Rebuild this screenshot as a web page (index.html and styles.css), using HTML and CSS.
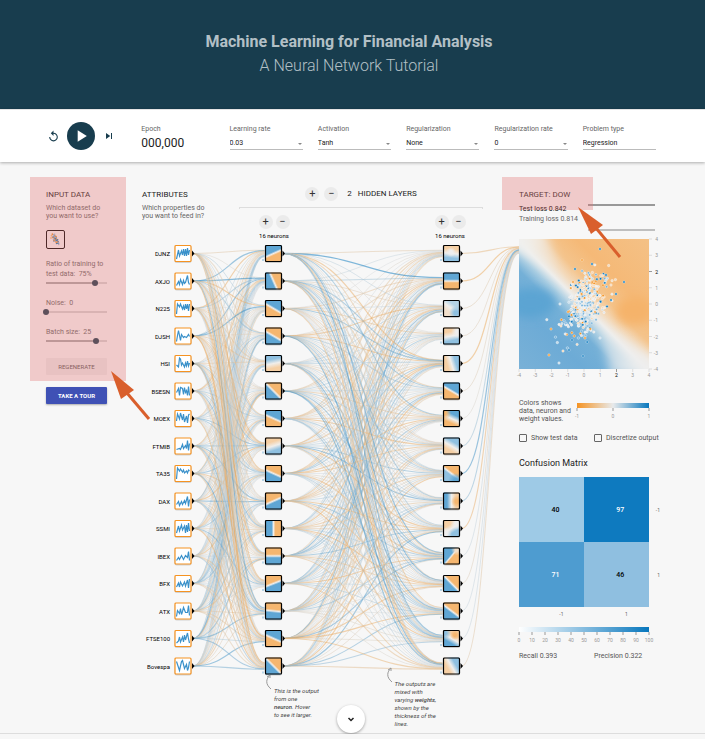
FILE: index.html
```html
<!DOCTYPE html>
<html lang="en">
<head>
<meta charset="utf-8">
<title>Machine Learning for Financial Analysis</title>
<link rel="stylesheet" href="styles.css">
</head>
<body>
<header class="masthead">
  <h1>Machine Learning for Financial Analysis</h1>
  <p>A Neural Network Tutorial</p>
</header>

<section class="controls">
  <div class="playback">
    <button class="icon-btn" aria-label="Reset">
      <svg viewBox="0 0 24 24" width="13" height="13"><path d="M12 5V1L7 6l5 5V7c3.300 0 6 2.700 6 6s-2.700 6-6 6-6-2.700-6-6H4c0 4.400 3.600 8 8 8s8-3.600 8-8-3.600-8-8-8z"/></svg>
    </button>
    <button class="play-btn" aria-label="Run">
      <svg viewBox="0 0 24 24" width="20" height="20"><path d="M8 5v14l11-7z"/></svg>
    </button>
    <button class="icon-btn" aria-label="Step">
      <svg viewBox="0 0 24 24" width="12" height="12"><path d="M6 18l8.500-6L6 6v12zM16 6v12h2V6h-2z"/></svg>
    </button>
  </div>
  <div class="epoch"><span class="label">Epoch</span><output>000,000</output></div>
  <div class="field"><label for="lr">Learning rate</label><div class="select"><select id="lr"><option>0.03</option></select></div></div>
  <div class="field"><label for="act">Activation</label><div class="select"><select id="act"><option>Tanh</option></select></div></div>
  <div class="field"><label for="reg">Regularization</label><div class="select"><select id="reg"><option>None</option></select></div></div>
  <div class="field"><label for="rate">Regularization rate</label><div class="select"><select id="rate"><option>0</option></select></div></div>
  <div class="field"><label for="problem">Problem type</label><div class="select plain"><select id="problem"><option>Regression</option></select></div></div>
</section>

<main class="board">
  <section class="inputs">
    <h2>Input data</h2>
    <p class="hint">Which dataset do<br>you want to use?</p>
    <button class="dataset" aria-label="Dataset"><svg id="thumb" viewBox="0 0 15 15"></svg></button>
    <div class="slider"><label for="ratio">Ratio of training to<br>test data:&nbsp; 75%</label><input type="range" id="ratio" min="0" max="100" value="80"></div>
    <div class="slider"><label for="noise">Noise:&nbsp; 0</label><input type="range" id="noise" min="0" max="50" value="0"></div>
    <div class="slider"><label for="batch">Batch size:&nbsp; 25</label><input type="range" id="batch" min="1" max="30" value="25"></div>
    <button class="regenerate">REGENERATE</button>
    <button class="tour">TAKE A TOUR</button>
    <svg class="pointer" viewBox="0 0 42 52" width="42" height="52"><path d="M1 1L24 20 11 29z"/><path class="shaft" d="M17 23L39 49"/></svg>
  </section>

  <section class="network">
    <div class="network-head">
      <div>
        <h2>Attributes</h2>
        <p class="hint">Which properties do<br>you want to feed in?</p>
      </div>
      <div class="layers">
        <div class="layer-count">
          <button class="round" aria-label="Add layer">+</button><button class="round" aria-label="Remove layer">−</button>
          <h2><span>2</span> Hidden layers</h2>
        </div>
        <div class="bracket"></div>
        <div class="layer-tools">
          <div><button class="round" aria-label="Add neuron to layer 1">+</button><button class="round" aria-label="Remove neuron from layer 1">−</button><p>16 neurons</p></div>
          <div><button class="round" aria-label="Add neuron to layer 2">+</button><button class="round" aria-label="Remove neuron from layer 2">−</button><p>16 neurons</p></div>
        </div>
      </div>
    </div>
    <div class="canvas">
      <svg id="net" viewBox="0 0 377 440"></svg>
      <p class="note note-neuron"><svg viewBox="0 0 10 18" width="10" height="18"><path d="M7 16C1 11 2 6 6 2M3 4L6 2 6 5"/></svg>This is the output<br>from one<br><b>neuron</b>. Hover<br>to see it larger.</p>
      <p class="note note-weights"><svg viewBox="0 0 10 18" width="10" height="18"><path d="M7 16C1 11 2 6 6 2M3 4L6 2 6 5"/></svg>The outputs are<br>mixed with<br>varying <b>weights</b>,<br>shown by the<br>thickness of the<br>lines.</p>
    </div>
  </section>

  <section class="result">
    <h2>Target: DOW</h2>
    <div class="loss">
      <div class="loss-text"><p class="test">Test loss 0.842</p><p>Training loss 0.814</p></div>
      <svg viewBox="0 0 67 28" preserveAspectRatio="none"><path d="M0 1H67" stroke="#999" stroke-width="2"/><path d="M0 26H67" stroke="#bfbfbf" stroke-width="2"/></svg>
    </div>
    <svg id="heat" viewBox="0 0 141 141"></svg>
    <div class="legend">
      <p>Colors shows<br>data, neuron and<br>weight values.</p>
      <svg id="legend-bar" viewBox="0 0 84 24"></svg>
    </div>
    <div class="checks">
      <label><input type="checkbox">Show test data</label>
      <label><input type="checkbox">Discretize output</label>
    </div>
    <h3>Confusion Matrix</h3>
    <table class="matrix">
      <tbody>
        <tr><td class="c40">40</td><td class="c97">97</td><th scope="row">-1</th></tr>
        <tr><td class="c71">71</td><td class="c46">46</td><th scope="row">1</th></tr>
      </tbody>
      <tfoot><tr><th scope="col">-1</th><th scope="col">1</th><td></td></tr></tfoot>
    </table>
    <svg id="scale" viewBox="0 0 141 18"></svg>
    <div class="scores"><span>Recall 0.393</span><span>Precision 0.322</span></div>
    <svg class="pointer" viewBox="0 0 46 56" width="46" height="56"><path d="M1 2L26 20 14 29z"/><path class="shaft" d="M19 23L43 52"/></svg>
  </section>

  <button class="more" aria-label="Read more"><svg viewBox="0 0 24 24" width="12" height="12"><path d="M7 10l5 5 5-5"/></svg></button>
</main>
<script src="network.js"></script>
</body>
</html>
```
FILE: styles.css
```css
* { box-sizing: border-box; }

body {
  margin: 0;
  background: #f7f7f7;
  color: #222;
  font-family: Roboto, "Liberation Sans", sans-serif;
  font-size: 7px;
  line-height: 8px;
}

h1, h2, h3, p { margin: 0; font-weight: 400; }

button, select, input { font: inherit; color: inherit; margin: 0; }

button { border: 0; padding: 0; background: none; cursor: pointer; }

svg { display: block; overflow: visible; }

.masthead {
  height: 109px;
  padding: 30px 7px 0 0;
  background: #183d4e;
  color: #b3c0c6;
  text-align: center;
  line-height: 24px;
}

.masthead h1 { font-size: 16px; line-height: 24px; font-weight: 700; }
.masthead p { font-size: 16px; font-weight: 300; }

.controls {
  display: grid;
  grid-template-columns: 80fr repeat(6, 73fr);
  column-gap: 15px;
  padding: 12px 49px 9px 46px;
  background: #fff;
  border-top: 1px solid #e4e4e4;
  box-shadow: 0 1px 3px rgba(0, 0, 0, .3);
  position: relative;
  color: #666;
  height: 53px;
}

.playback { display: flex; align-items: center; gap: 6px; height: 28px; }

.icon-btn { display: grid; place-items: center; width: 15px; height: 15px; }

.icon-btn svg { fill: #183d4e; }

.play-btn {
  display: grid;
  place-items: center;
  flex: none;
  width: 28px;
  height: 28px;
  border-radius: 50%;
  background: #183d4e;
}

.play-btn svg { fill: #fff; }

.epoch, .field { display: flex; flex-direction: column; padding-top: 3px; }

.epoch output { color: #222; font-size: 12px; line-height: 14px; font-weight: 400; margin-top: 3px; }

.select { position: relative; margin-top: 4px; border-bottom: 1px solid #bbb; }

.select::after {
  content: "";
  position: absolute;
  right: 1px;
  top: 6px;
  border: 2px solid transparent;
  border-top-color: #888;
}

.select.plain::after { display: none; }

.select select {
  display: block;
  appearance: none;
  width: 100%;
  height: 12px;
  padding: 0;
  border: 0;
  background: none;
  color: #222;
}

.board {
  position: relative;
  display: grid;
  grid-template-columns: minmax(0, 96fr) minmax(0, 377fr) minmax(0, 141fr);
  padding: 28px 45px 0 46px;
  border-bottom: 1px solid #ddd;
  min-height: 572px;
}

h2 { font-size: 8px; line-height: 10px; text-transform: uppercase; }

.hint { margin-top: 4px; color: #666; }

.inputs, .result { position: relative; }

.inputs { padding-right: 35px; }

.inputs::before, .result::before {
  content: "";
  position: absolute;
  z-index: 2;
  background: rgba(227, 118, 118, .35);
  pointer-events: none;
}

.inputs::before { top: -13px; left: -16px; right: 16px; height: 204px; }
.result::before { top: -13px; left: -17px; width: 91px; height: 33px; }

.dataset {
  display: block;
  width: 19px;
  height: 19px;
  margin: 10px 0;
  border: 1px solid #000;
  border-radius: 2px;
  padding: 1px;
}

.slider { margin-bottom: 11px; color: #666; line-height: 10px; }

.slider label { display: block; white-space: nowrap; }

.slider input {
  display: block;
  appearance: none;
  width: calc(100% + 6px);
  height: 8px;
  margin: 0 -3px;
  background: linear-gradient(#d5d5d5, #d5d5d5) center / calc(100% - 6px) 2px no-repeat;
}

.slider input::-webkit-slider-thumb {
  appearance: none;
  width: 6px;
  height: 6px;
  border-radius: 50%;
  background: #183d4e;
}

.slider #ratio, .slider #batch {
  background: linear-gradient(90deg, #aaa 80%, #d5d5d5 80%) center / calc(100% - 6px) 2px no-repeat;
}

.regenerate, .tour { display: block; width: 100%; height: 17px; border-radius: 1px; font-size: 6px; white-space: nowrap; }

.regenerate { margin-top: 13px; background: #ececec; color: #555; }

.tour {
  position: relative;
  margin-top: 12px;
  background: #3f51b5;
  color: #fff;
  font-weight: 700;
  box-shadow: 0 1px 2px rgba(0, 0, 0, .3);
}

.pointer { position: absolute; z-index: 3; fill: #d95f2c; pointer-events: none; }
.pointer .shaft { stroke: #d95f2c; stroke-width: 3; }
.inputs .pointer { left: 64px; top: 180px; }
.result .pointer { left: 58px; top: 15px; }

.network-head { display: grid; grid-template-columns: 97fr 244fr 36fr; height: 50px; }

.network-head .hint { white-space: nowrap; }

.round {
  width: 14px;
  height: 14px;
  border-radius: 50%;
  background: #ebebeb;
  color: #333;
  font-size: 11px;
  line-height: 14px;
}

.layer-count { display: flex; justify-content: center; gap: 5px; margin-top: -3px; align-items: center; }

.layer-count h2 { margin-left: 4px; white-space: nowrap; }

.layer-count h2 span { margin-right: 4px; }

.bracket { height: 2px; margin: 6px 0; border: 1px solid #ddd; border-bottom: 0; }

.layer-tools { display: flex; justify-content: space-between; text-align: center; }

.layer-tools > div { width: 70px; }

.layer-tools > div:last-child { width: 66px; }

.layer-tools .round + .round { margin-left: 3px; }

.layer-tools p { font-size: 6px; margin-top: 3px; color: #000; }

.canvas { position: relative; }

.note { position: absolute; font-size: 6px; font-style: italic; color: #444; white-space: nowrap; }

.note b { font-weight: 500; }

.note svg { position: absolute; left: -10px; top: -14px; fill: none; stroke: #999; }

.note-neuron { left: 35%; top: 447px; }
.note-weights { left: 67%; top: 440px; }

.loss { display: flex; justify-content: space-between; padding: 4px 5px 0 0; height: 39px; color: #666; line-height: 10px; }

.loss svg { width: 67px; height: 28px; margin-left: -10px; }

.loss-text { white-space: nowrap; }

.loss .test { color: #000; }

#heat, #scale { width: 100%; }

.legend { display: grid; grid-template-columns: 57fr 84fr; margin-top: 19px; color: #555; white-space: nowrap; }

#legend-bar { width: 100%; }

.checks { display: grid; grid-template-columns: 75fr 66fr; margin-top: 10px; color: #555; line-height: 10px; }

.checks label { display: flex; align-items: center; gap: 4px; white-space: nowrap; }

.checks input {
  appearance: none;
  flex: none;
  width: 8px;
  height: 8px;
  border: 1px solid #666;
  border-radius: 1px;
}

h3 { margin: 15px 0 9px; font-size: 9px; line-height: 10px; }

.matrix { width: 100%; border-collapse: collapse; table-layout: fixed; }

.matrix td { height: 65px; width: 46%; padding: 0 0 0 8px; text-align: center; font-weight: 500; }

.matrix th { padding: 0; font-size: 5px; font-weight: 400; color: #666; text-align: right; }

.matrix tfoot th { height: 14px; padding-left: 20px; text-align: center; }

.matrix tfoot td { height: 14px; width: 8%; padding: 0; }

.c40 { background: #9ecae6; color: #000; }
.c97 { background: #0e7abf; color: #fff; }
.c71 { background: #4e9cd0; color: #fff; }
.c46 { background: #8fbfe0; color: #000; }

#scale { margin-top: 6px; }

.scores { display: grid; grid-template-columns: 75fr 66fr; margin-top: 6px; line-height: 10px; color: #555; }

.more {
  position: absolute;
  left: 50%;
  bottom: 0;
  width: 28px;
  height: 28px;
  margin-left: -16px;
  border-radius: 50%;
  background: #fff;
  box-shadow: 0 1px 3px rgba(0, 0, 0, .35);
  display: grid;
  place-items: center;
}

.more svg { fill: none; stroke: #222; stroke-width: 3; }

.axis text { font-size: 5px; fill: #999; }
.axis .strong { fill: #000; }
.axis line { stroke: #999; stroke-width: 1; }
.axis .dim { stroke: #ddd; }
.attr-name { font-size: 6px; fill: #000; text-anchor: end; }
.links { fill: none; }
```
FILE: network.js
```js
const NS = "http://www.w3.org/2000/svg";
const BLUE = "#5fa6d4", ORANGE = "#f5b66f";
const PALE_BLUE = "#8fc0e0", PALE_ORANGE = "#f5cfa4";

function add(parent, tag, attrs, text) {
  const el = document.createElementNS(NS, tag);
  for (const key in attrs) el.setAttribute(key, attrs[key]);
  if (text !== undefined) el.textContent = text;
  parent.appendChild(el);
  return el;
}

let seed = 11;
function random() {
  seed = (seed * 16807) % 2147483647;
  return seed / 2147483647;
}
function gauss() {
  return random() + random() + random() + random() - 2;
}

function linear(svg, id, ends, stops) {
  const g = add(svg, "linearGradient", {
    id, gradientUnits: "userSpaceOnUse", x1: ends[0], y1: ends[1], x2: ends[2], y2: ends[3]
  });
  stops.forEach(s => add(g, "stop", { offset: s[0], "stop-color": s[1], "stop-opacity": s[2] === undefined ? 1 : s[2] }));
}

/* Network */
const net = document.getElementById("net");
const NAMES = ["DJNZ", "AXJO", "N225", "DJSH", "HSI", "BSESN", "MOEX", "FTMIB", "TA35", "DAX", "SSMI", "IBEX", "BFX", "ATX", "FTSE100", "Bovespa"];
const SPARKS = [
  "1,13 3,4 4,10 6,5 7,9 8,3 9,10 10,3 11,10 12,2 13,9 14,4",
  "1,12 3,8 4,11 5,6 7,11 8,7 9,10 10,9 12,2 13,9 14,11",
  "1,13 2,3 4,6 5,3 7,8 8,5 9,9 10,3 11,8 12,3 13,10 14,3",
  "1,13 2,7 3,2 5,12 6,6 8,9 9,8 11,9 13,6 14,8",
  "1,9 3,11 4,2 5,3 6,9 7,7 9,11 10,7 11,10 12,5 13,10 14,7",
  "1,9 3,5 4,12 5,4 7,5 8,11 9,4 10,9 11,7 12,12 13,3 14,12",
  "1,10 2,3 4,8 5,2 7,9 8,3 9,11 11,5 12,12 13,4 14,3",
  "1,11 4,10 5,11 7,6 8,10 10,7 11,10 12,2 13,12 14,5",
  "1,13 2,2 4,5 5,3 7,6 8,4 9,7 11,5 12,7 13,4 14,5",
  "1,11 3,8 4,12 6,8 7,11 9,7 10,10 12,3 13,13 14,6",
  "1,12 3,5 4,10 6,4 7,9 9,5 10,12 11,4 12,11 13,2 14,10",
  "1,12 3,9 4,11 6,7 8,11 10,7 12,9 13,3 14,12",
  "1,11 3,7 4,11 5,6 7,10 9,6 10,10 12,4 13,12 14,3",
  "1,13 2,7 4,10 5,5 6,11 7,8 8,4 10,9 12,9 13,2 14,12",
  "1,12 3,10 4,6 5,11 7,6 8,11 9,4 10,9 12,2 13,8 14,12",
  "1,3 3,9 4,12 6,3 7,2 9,10 11,6 12,12 13,9 14,3"
];
const X = [41, 131.5, 309.5];
const nodeY = i => 13.5 + i * 27.5;

function weightColor(w) {
  const to = w < 0 ? [245, 147, 34] : [8, 119, 189];
  const t = Math.min(1, Math.abs(w));
  return "rgb(" + [214, 219, 222].map((c, k) => Math.round(c + (to[k] - c) * t)).join(",") + ")";
}

const links = add(net, "g", { class: "links" });
function link(x0, y0, x1, y1, w) {
  const m = (x0 + x1) / 2;
  add(links, "path", {
    d: `M${x0},${y0}C${m},${y0} ${m},${y1} ${x1},${y1}`,
    stroke: weightColor(w),
    "stroke-width": (0.9 + Math.abs(w) * 0.4).toFixed(2),
    "stroke-opacity": 0.5
  });
}
const STRONG = [
  { "0-0": -0.3, "1-0": 0.7, "1-1": 0.9, "3-2": 0.8, "15-15": 0.5, "15-14": 0.7, "14-13": 0.6 },
  { "0-1": 1, "0-0": -0.3, "15-15": -0.4, "1-1": 0.3, "15-13": 0.5 }
];
for (let layer = 0; layer < 2; layer++) {
  for (let j = 0; j < 16; j++) {
    for (let i = 0; i < 16; i++) {
      const w = STRONG[layer][i + "-" + j];
      const bias = layer === 0 && i < 4 && j > 2 ? -0.2 : -0.03;
      const value = w === undefined ? Math.max(-0.65, Math.min(0.65, gauss() * 0.6 + bias)) : w;
      link(X[layer] + 10, nodeY(i), X[layer + 1] - 9, nodeY(j) + (i - 7.5) / 16 * 7, value);
    }
  }
}
[-0.5, -0.7, -0.25, -0.2, -0.7, -0.2, -0.1, 0.3, 0.75, 0.4, -0.6, 0.1, -0.2, 0.1, 0.1, -0.3]
  .forEach((w, i) => link(X[2] + 10, nodeY(i), 377, 10 + (i - 7.5) / 16 * 7, w));

/* Tile: direction, start colour, end colour, softness, then optional blobs [x, y, r, colour] */
const LAYER1 = [
  [.4, .9, BLUE, ORANGE], [.9, -.4, BLUE, ORANGE], [-.5, .85, BLUE, ORANGE], [-.5, .85, ORANGE, BLUE],
  [.2, 1, PALE_BLUE, PALE_ORANGE, 1], [-.7, .7, ORANGE, BLUE], [-.4, .9, BLUE, ORANGE], [.3, .95, PALE_ORANGE, PALE_BLUE, 1],
  [-.4, .9, ORANGE, BLUE], [.4, .9, ORANGE, BLUE], [1, 0, BLUE, ORANGE], [0, 1, ORANGE, BLUE],
  [.35, .9, ORANGE, BLUE], [-.1, 1, ORANGE, BLUE], [-.4, .9, BLUE, ORANGE], [-.7, .7, ORANGE, BLUE]
];
const LAYER2 = [
  [-.1, 1, PALE_ORANGE, PALE_BLUE, 1, [[8, 7, 5, "#eee"]]],
  [0, 1, BLUE, ORANGE],
  [-.6, .8, "#b4d3e6", "#f1dfcb", 1, [[13, 13, 7, PALE_BLUE]]],
  [.2, 1, PALE_ORANGE, PALE_BLUE, 1, [[15, 4, 7, "#eee"]]],
  [.95, -.3, PALE_ORANGE, PALE_BLUE, 1],
  [-.5, .85, BLUE, ORANGE],
  [-.4, .9, BLUE, ORANGE, 1, [[1, 3, 7, ORANGE]]],
  [-.5, .85, PALE_BLUE, PALE_ORANGE, 1],
  [-.6, .8, ORANGE, PALE_BLUE, 0, [[13, 16, 8, BLUE]]],
  [1, 0, BLUE, PALE_ORANGE, 1, [[14, 9, 6, ORANGE]]],
  [.5, .8, PALE_ORANGE, PALE_BLUE, 1, [[14, 3, 7, "#eee"], [2, 14, 7, "#eee"]]],
  [.6, .5, BLUE, ORANGE, 0, [[14, 2, 6, "#f1dfcb"]]],
  [-.7, .7, ORANGE, BLUE],
  [-.6, .8, ORANGE, BLUE],
  [-.5, .85, PALE_ORANGE, BLUE, 1, [[2, 3, 6, PALE_BLUE], [12, 5, 5, ORANGE]]],
  [.85, -.5, PALE_ORANGE, PALE_BLUE, 1]
];

function tile(x, y, spec, id) {
  const [dx, dy, a, b, soft, blobs] = spec;
  const spread = soft ? 0.25 : 0.1;
  linear(net, id, [8.5 - dx * 9, 8.5 - dy * 9, 8.5 + dx * 9, 8.5 + dy * 9],
    [[0.5 - spread, a], [0.5, "#f0eeeb"], [0.5 + spread, b]]);
  const g = add(net, "g", { transform: `translate(${x - 8.5} ${y - 8.5})` });
  add(g, "rect", { x: 0, y: 1, width: 17, height: 17, rx: 2, fill: "#000", opacity: .18 });
  add(g, "rect", { width: 17, height: 17, rx: 1, fill: `url(#${id})` });
  (blobs || []).forEach((blob, k) => {
    const r = add(g, "radialGradient", { id: id + "b" + k });
    add(r, "stop", { offset: .3, "stop-color": blob[3] });
    add(r, "stop", { offset: 1, "stop-color": blob[3], "stop-opacity": 0 });
    add(g, "circle", { cx: blob[0], cy: blob[1], r: blob[2], fill: `url(#${id}b${k})`, "clip-path": "url(#tile-clip)" });
  });
  add(g, "rect", { x: .5, y: .5, width: 16, height: 16, rx: 1, fill: "none", stroke: "#000", "stroke-width": 1.2 });
  add(g, "rect", { x: -3, y: 14, width: 2, height: 2, fill: "#b9d6e8" });
}
add(add(net, "clipPath", { id: "tile-clip" }), "rect", { width: 17, height: 17 });

for (let i = 0; i < 16; i++) {
  const y = nodeY(i);
  add(net, "text", { x: 28, y: y + 2.5, class: "attr-name" }, NAMES[i]);
  const g = add(net, "g", { transform: `translate(${X[0] - 8.5} ${y - 8.5})` });
  add(g, "rect", { x: 0, y: 1, width: 17, height: 17, rx: 2, fill: "#000", opacity: .15 });
  add(g, "rect", { x: .5, y: .5, width: 16, height: 16, rx: 1, fill: "#fff", stroke: "#f59322", "stroke-width": 1.2 });
  add(g, "polyline", { points: SPARKS[i], transform: "translate(1 1)", fill: "none", stroke: "#3a91ca", "stroke-width": 1.2 });
  tile(X[1], y, LAYER1[i], "a" + i);
  tile(X[2], y, LAYER2[i], "b" + i);
  X.forEach(x => add(net, "path", { d: `M${x + 9} ${y - 3}L${x + 11.5} ${y}L${x + 9} ${y + 3}z`, fill: "#000" }));
}

/* Output heatmap */
const heat = document.getElementById("heat");
linear(heat, "field", [0, 130, 130, 0], [
  [0, "#79b1d7"], [.25, "#6dabd6"], [.38, "#74b0d7"], [.44, "#a9cde2"], [.49, "#eeeeec"],
  [.54, "#f3d9ba"], [.6, "#f4c48c"], [.72, "#f5b977"], [1, "#f4c186"]
]);
linear(heat, "fade-nw", [0, 0, 42, 42], [[0, "#f0f0ee", 1], [1, "#f0f0ee", 0]]);
linear(heat, "fade-se", [130, 130, 70, 70], [[0, "#eeeeee", 1], [1, "#eeeeee", 0]]);
add(add(heat, "clipPath", { id: "heat-clip" }), "rect", { width: 130, height: 130 });
add(add(heat, "filter", { id: "soft", x: "-50%", y: "-50%", width: "200%", height: "200%" }), "feGaussianBlur", { stdDeviation: 5 });
const field = add(heat, "g", { "clip-path": "url(#heat-clip)" });
add(field, "rect", { width: 130, height: 130, fill: "url(#field)" });
add(field, "ellipse", { cx: 12, cy: 64, rx: 24, ry: 15, fill: "#5ba4d3", filter: "url(#soft)" });
add(field, "ellipse", { cx: 115, cy: 72, rx: 18, ry: 14, fill: "#f5b36a", filter: "url(#soft)" });
add(field, "path", { d: "M-8 8L-8 -8 26 -8 50 46z", fill: "url(#fade-nw)", filter: "url(#soft)" });
add(field, "path", { d: "M76 78L136 118 136 136 92 136z", fill: "url(#fade-se)", filter: "url(#soft)" });

const DOTS = ["#0877bd", "#f59322", "#e3e5e6", "#f3d6b5", "#c5dcea", "#e8eaeb", "#f0dcc4", "#78b3da"];
const dot = (x, y, c) => add(field, "circle", { cx: x, cy: y, r: 1.2, fill: c, stroke: "#fff", "stroke-width": .5, "stroke-opacity": .8 });
for (let i = 0; i < 330; i++) {
  const u = gauss(), v = gauss();
  dot(66 + u * 13 + v * 12, 64 - v * 27 + u * 9, DOTS[Math.floor(random() * DOTS.length)]);
}
[[81, 10, 0], [63, 21, 1], [73, 25, 0], [56, 30, 0], [87, 36, 0], [105, 43, 0], [97, 55, 0], [32, 90, 1], [30, 116, 1], [40, 124, 4],
 [44, 112, 3], [50, 111, 0], [64, 117, 0], [42, 87, 3], [41, 65, 4], [53, 101, 0], [66, 99, 1], [81, 99, 4], [92, 46, 3], [92, 61, 0], [54, 43, 1]]
  .forEach(p => dot(p[0], p[1], DOTS[p[2]]));

const axis = add(heat, "g", { class: "axis" });
for (let v = -4; v <= 4; v++) {
  const p = (v + 4) * 16.25;
  const strong = v === 2 ? "strong" : "";
  add(axis, "line", { x1: p, x2: p, y1: 130, y2: 133, class: strong ? "" : "dim" });
  add(axis, "text", { x: p, y: 138, "text-anchor": "middle", class: strong }, v);
  add(axis, "line", { x1: 130, x2: 133, y1: 130 - p, y2: 130 - p, class: strong ? "" : "dim" });
  add(axis, "text", { x: 139, y: 132 - p, "text-anchor": "end", class: strong }, v);
}

/* Colour legend */
const legend = document.getElementById("legend-bar");
linear(legend, "weights", [1, 0, 73, 0], [[0, "#f59322"], [.5, "#e8eaeb"], [1, "#0877bd"]]);
add(legend, "rect", { x: 1, y: 4, width: 72, height: 5, fill: "url(#weights)" });
const lg = add(legend, "g", { class: "axis" });
[["-1", 1], ["0", 37], ["1", 73]].forEach(t => {
  add(lg, "line", { x1: t[1], x2: t[1], y1: 9, y2: 12 });
  add(lg, "text", { x: t[1], y: 19, "text-anchor": "middle" }, t[0]);
});

/* Confusion scale */
const scale = document.getElementById("scale");
linear(scale, "percent", [0, 0, 130, 0], [[0, "#ffffff"], [.4, "#9ecae6"], [1, "#0877bd"]]);
add(scale, "rect", { width: 130, height: 5, fill: "url(#percent)" });
const sg = add(scale, "g", { class: "axis" });
for (let v = 0; v <= 10; v++) {
  add(sg, "line", { x1: v * 13, x2: v * 13, y1: 5, y2: 8 });
  add(sg, "text", { x: v * 13, y: 15, "text-anchor": "middle" }, v * 10);
}

/* Dataset thumbnail */
const thumb = document.getElementById("thumb");
for (let i = 0; i < 60; i++) {
  const u = gauss(), v = gauss();
  add(thumb, "circle", { cx: 7.5 + v * 2.6 + u * 1.6, cy: 7.5 + v * 4.2 - u * 1.2, r: .7, fill: ["#0877bd", "#f59322", "#8fb8d2"][i % 3] });
}
```
